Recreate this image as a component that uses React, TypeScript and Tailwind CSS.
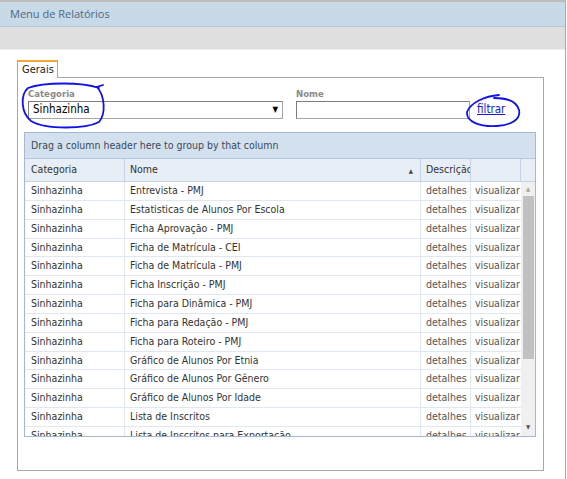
import React from 'react';

const rows = [
  'Entrevista - PMJ',
  'Estatisticas de Alunos Por Escola',
  'Ficha Aprovação - PMJ',
  'Ficha de Matrícula - CEI',
  'Ficha de Matrícula - PMJ',
  'Ficha Inscrição - PMJ',
  'Ficha para Dinâmica - PMJ',
  'Ficha para Redação - PMJ',
  'Ficha para Roteiro - PMJ',
  'Gráfico de Alunos Por Etnia',
  'Gráfico de Alunos Por Gênero',
  'Gráfico de Alunos Por Idade',
  'Lista de Inscritos',
  'Lista de Inscritos para Exportação',
];

const gridFont = { fontFamily: '"DejaVu Sans Condensed", "Liberation Sans", sans-serif' };

export default function App() {
  return (
    <div className="relative w-[567px] h-[479px] bg-white overflow-hidden">
      <div className="w-[566px] h-[479px] border-t-2 border-r border-t-[#bdbdbd] border-r-[#a9a9a9] flex flex-col">
        {/* title bar */}
        <div className="h-[25px] bg-[#c8d9e7] border-b border-[#b7c6df] flex items-center px-[10px]">
          <span className="text-[11px] text-[#4b6888]" style={{ fontFamily: '"Open Sans", sans-serif' }}>
            Menu de Relatórios
          </span>
        </div>
        <div className="h-[23px] bg-[#dfdfdf] border-b border-[#ececec]" />

        {/* content */}
        <div className="pl-[17px] pt-[10px]" style={gridFont}>
          <div className="flex">
            <div className="relative z-10 -mb-px h-[18px] w-[41px] bg-white border-t-2 border-x border-t-[#f3a53c] border-x-[#a7a7a7] flex items-center pl-[4px] text-[11px] text-[#222]">
              Gerais
            </div>
          </div>
          <div className="w-[527px] h-[394px] border border-[#a7a7a7]">
            {/* filter row */}
            <div className="flex items-end pt-[11px] pl-[10px]">
              <div className="flex flex-col">
                <span className="text-[9.5px] font-bold text-[#8a8a8a] leading-[10px] mb-[2px]">Categoria</span>
                <div className="w-[255px] h-[18px] border border-[#a5a5a5] border-t-[#7e7e7e] border-l-[#7e7e7e] flex items-center justify-between px-[4px]">
                  <span className="text-[11.5px] text-black">Sinhazinha</span>
                  <span className="text-[8px] text-black">▼</span>
                </div>
              </div>
              <div className="flex flex-col ml-[13px]">
                <span className="text-[9.5px] font-bold text-[#8a8a8a] leading-[10px] mb-[2px]">Nome</span>
                <div className="w-[174px] h-[18px] border border-[#a5a5a5] border-t-[#7e7e7e] border-l-[#7e7e7e]" />
              </div>
              <a className="ml-[7px] mb-[1px] text-[11.5px] text-[#1a1ad6] underline">filtrar</a>
            </div>

            {/* grid */}
            <div className="ml-[6px] mt-[13px] w-[512px] border border-[#a3b8d2] text-[10.5px] text-[#333]">
              <div className="h-[26px] bg-[#d3e0ee] border-b border-[#b3c6dd] flex items-center pl-[6px] text-[#3b4a5c]">
                Drag a column header here to group by that column
              </div>
              <div className="h-[23px] bg-[#e8eef6] border-b border-[#c3d2e4] flex text-[#333]">
                <div className="w-[100px] border-r border-[#c3d2e4] flex items-center pl-[6px]">Categoria</div>
                <div className="w-[296px] border-r border-[#c3d2e4] flex items-center justify-between pl-[5px] pr-[7px]">
                  <span>Nome</span>
                  <span className="text-[6px] text-[#444]">▲</span>
                </div>
                <div className="w-[50px] border-r border-[#c3d2e4] flex items-center pl-[5px] overflow-hidden whitespace-nowrap">
                  Descrição
                </div>
                <div className="w-[50px] border-r border-[#c3d2e4]" />
                <div className="flex-1" />
              </div>
              <div className="h-[254px] flex overflow-hidden">
                <div className="w-[496px]">
                  {rows.map((r) => (
                    <div key={r} className="h-[18.85px] border-b border-[#dfe7f1] flex">
                      <div className="w-[100px] border-r border-[#dfe7f1] flex items-center pl-[6px] whitespace-nowrap">
                        Sinhazinha
                      </div>
                      <div className="w-[296px] border-r border-[#dfe7f1] flex items-center pl-[5px] whitespace-nowrap">
                        {r}
                      </div>
                      <div className="w-[50px] border-r border-[#dfe7f1] flex items-center pl-[5px] whitespace-nowrap text-[#555]">
                        detalhes
                      </div>
                      <div className="w-[50px] flex items-center pl-[4px] whitespace-nowrap overflow-hidden text-[#555]">
                        visualizar
                      </div>
                    </div>
                  ))}
                </div>
                <div className="flex-1 bg-[#f0f0f0] flex flex-col items-center">
                  <span className="text-[6px] text-[#a3a3a3] mt-[3px] leading-[8px]">▲</span>
                  <div className="w-[11px] h-[163px] bg-[#c1c1c1] mt-[3px]" />
                  <div className="flex-1" />
                  <span className="text-[6px] text-[#555] mb-[5px] leading-[8px]">▼</span>
                </div>
              </div>
            </div>
          </div>
        </div>
      </div>

      {/* hand-drawn annotations */}
      <svg className="absolute inset-0 pointer-events-none" width="567" height="479" viewBox="0 0 567 479">
        <path
          d="M99 88 C82 82 44 82 28 88 C20 95 21 113 31 121 C46 130 86 129 99 122 C106 114 105 96 97 87 L103 85"
          fill="none"
          stroke="#1212e6"
          strokeWidth="1.8"
          strokeLinecap="round"
        />
        <path
          d="M499 95 C485 96 470 103 467 112 C466 122 480 127 497 126 C512 125 521 119 519 110 C517 102 508 98 494 98"
          fill="none"
          stroke="#1212e6"
          strokeWidth="1.8"
          strokeLinecap="round"
        />
      </svg>
    </div>
  );
}
